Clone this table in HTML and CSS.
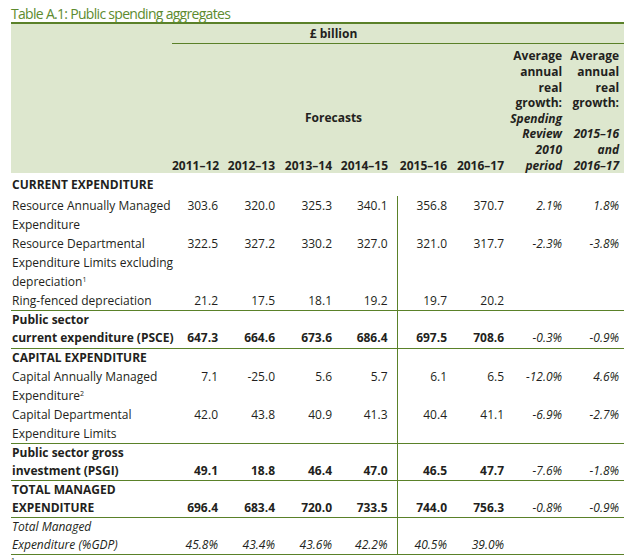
FILE: index.html
```html
<!DOCTYPE html>
<html>
<head>
<meta charset="utf-8">
<link rel="stylesheet" href="styles.css">
</head>
<body>
<div class="page">
  <h1 class="title">Table A.1: Public spending aggregates</h1>
  <table class="tbl">
    <colgroup>
      <col class="c-label"><col class="c1"><col class="c2"><col class="c3"><col class="c4"><col class="c5"><col class="c6"><col class="c7"><col class="c8">
    </colgroup>
    <thead>
      <tr class="h-unit">
        <th></th>
        <th colspan="6" class="unit">£ billion</th>
        <th colspan="2" class="unit-rest"></th>
      </tr>
      <tr class="h-main">
        <th rowspan="2"></th>
        <th colspan="6" class="fc">Forecasts</th>
        <th rowspan="2" class="avg">Average<br>annual<br>real<br>growth:<br><i>Spending<br>Review<br>2010<br>period</i></th>
        <th rowspan="2" class="avg">Average<br>annual<br>real<br>growth:<br>&nbsp;<br><i>2015–16<br>and<br>2016–17</i></th>
      </tr>
      <tr class="h-years">
        <th>2011–12</th><th>2012–13</th><th>2013–14</th><th class="vl">2014–15</th><th>2015–16</th><th>2016–17</th>
      </tr>
    </thead>
    <tbody>
      <tr class="sec first">
        <td class="lbl b">CURRENT EXPENDITURE</td><td></td><td></td><td></td><td class="vl"></td><td></td><td></td><td></td><td></td>
      </tr>
      <tr>
        <td class="lbl">Resource Annually Managed<br>Expenditure</td><td>303.6</td><td>320.0</td><td>325.3</td><td class="vl">340.1</td><td>356.8</td><td>370.7</td><td class="i">2.1%</td><td class="i">1.8%</td>
      </tr>
      <tr>
        <td class="lbl">Resource Departmental<br>Expenditure Limits excluding<br>depreciation<sup>1</sup></td><td>322.5</td><td>327.2</td><td>330.2</td><td class="vl">327.0</td><td>321.0</td><td>317.7</td><td class="i">-2.3%</td><td class="i">-3.8%</td>
      </tr>
      <tr class="ruled">
        <td class="lbl">Ring-fenced depreciation</td><td>21.2</td><td>17.5</td><td>18.1</td><td class="vl">19.2</td><td>19.7</td><td>20.2</td><td></td><td></td>
      </tr>
      <tr class="tot psce ruled">
        <td class="lbl">Public sector<br>current expenditure (PSCE)</td><td>647.3</td><td>664.6</td><td>673.6</td><td class="vl">686.4</td><td>697.5</td><td>708.6</td><td class="i n">-0.3%</td><td class="i n">-0.9%</td>
      </tr>
      <tr class="sec cap">
        <td class="lbl b">CAPITAL EXPENDITURE</td><td></td><td></td><td></td><td class="vl"></td><td></td><td></td><td></td><td></td>
      </tr>
      <tr>
        <td class="lbl">Capital Annually Managed<br>Expenditure<sup>2</sup></td><td>7.1</td><td>-25.0</td><td>5.6</td><td class="vl">5.7</td><td>6.1</td><td>6.5</td><td class="i">-12.0%</td><td class="i">4.6%</td>
      </tr>
      <tr class="ruled">
        <td class="lbl">Capital Departmental<br>Expenditure Limits</td><td>42.0</td><td>43.8</td><td>40.9</td><td class="vl">41.3</td><td>40.4</td><td>41.1</td><td class="i">-6.9%</td><td class="i">-2.7%</td>
      </tr>
      <tr class="tot ruled">
        <td class="lbl">Public sector gross<br>investment (PSGI)</td><td>49.1</td><td>18.8</td><td>46.4</td><td class="vl">47.0</td><td>46.5</td><td>47.7</td><td class="i n">-7.6%</td><td class="i n">-1.8%</td>
      </tr>
      <tr class="tot ruled">
        <td class="lbl">TOTAL MANAGED<br>EXPENDITURE</td><td>696.4</td><td>683.4</td><td>720.0</td><td class="vl">733.5</td><td>744.0</td><td>756.3</td><td class="i n">-0.8%</td><td class="i n">-0.9%</td>
      </tr>
      <tr class="gdp ruled">
        <td class="lbl">Total Managed<br>Expenditure (%GDP)</td><td>45.8%</td><td>43.4%</td><td>43.6%</td><td class="vl">42.2%</td><td>40.5%</td><td>39.0%</td><td></td><td></td>
      </tr>
    </tbody>
  </table>
  <p class="note"><sup>1</sup> Resource DEL excluding depreciation is the Treasury's primary control within resource budgets and is the basis on which the Spending Review has been settled.</p>
</div>
</body>
</html>
```
FILE: styles.css
```css
html, body {
  margin: 0;
  padding: 0;
  background: #ffffff;
}
.page {
  padding: 0 0 0 11px;
  font-family: "Open Sans", "Noto Sans", sans-serif;
  color: #231f20;
}
.title {
  margin: 0;
  padding-top: 5px;
  height: 17px;
  font-size: 14px;
  font-weight: 400;
  line-height: 17px;
  color: #5d8b2f;
  letter-spacing: -0.7px;
  border-bottom: 2px solid #5a8129;
  width: 613px;
  box-sizing: content-box;
}
.tbl {
  width: 613px;
  table-layout: fixed;
  border-collapse: collapse;
  font-size: 12px;
}
.c-label { width: 161px; }
.c1 { width: 51px; }
.c2 { width: 57px; }
.c3 { width: 57px; }
.c4 { width: 60px; }
.c5 { width: 55px; }
.c6 { width: 57px; }
.c7 { width: 58px; }
.c8 { width: 57px; }

thead th {
  background: #dde7ce;
  font-weight: 700;
  text-align: right;
  padding: 0 5px 0 0;
  line-height: 15.6px;
  white-space: nowrap;
}
.h-unit th {
  height: 19px;
  line-height: 19px;
}
.h-unit .unit {
  text-align: center;
  padding-right: 14px;
  border-bottom: 1px solid #5a8129;
}
.h-unit .unit-rest {
  border-bottom: 1px solid #5a8129;
}
.h-main th {
  padding-top: 4px;
  vertical-align: bottom;
}
.h-main .fc {
  text-align: center;
  padding-right: 14px;
  padding-top: 66px;
  padding-bottom: 32px;
  vertical-align: top;
}
.h-main .avg {
  padding-bottom: 0;
}
.h-years th {
  padding-bottom: 0;
  vertical-align: bottom;
  height: 15.6px;
}
thead th.vl {
  padding-right: 9px;
}

tbody td {
  text-align: right;
  padding: 0 5px 0 0;
  line-height: 19px;
  vertical-align: top;
  white-space: nowrap;
}
tbody td.lbl {
  text-align: left;
  padding-left: 1px;
}
tbody td.vl {
  padding-right: 9px;
  border-right: 1px solid #5a8129;
}
tbody tr.first td.vl {
  border-right-color: transparent;
}
tbody td.b {
  font-weight: 700;
}
tbody td.i {
  font-style: italic;
}
tbody tr.first td {
  padding-top: 2px;
  padding-bottom: 2px;
}
tbody tr.cap td {
  line-height: 18px;
}
tbody tr.ruled td {
  border-bottom: 1px solid #5a8129;
}
tbody tr.tot td {
  font-weight: 700;
  line-height: 17.5px;
  padding-bottom: 1px;
  vertical-align: bottom;
}
tbody tr.psce td {
  line-height: 18px;
  padding-bottom: 1px;
}
tbody tr.tot td.i {
  font-weight: 400;
}
tbody tr.gdp td {
  font-style: italic;
  line-height: 17.5px;
  padding-bottom: 1px;
  vertical-align: bottom;
}
sup {
  font-size: 7px;
  line-height: 0;
  vertical-align: 4px;
}
.note {
  margin: 0;
  padding-top: 3px;
  font-size: 9px;
  line-height: 11px;
  white-space: nowrap;
  overflow: hidden;
  width: 613px;
}
```
